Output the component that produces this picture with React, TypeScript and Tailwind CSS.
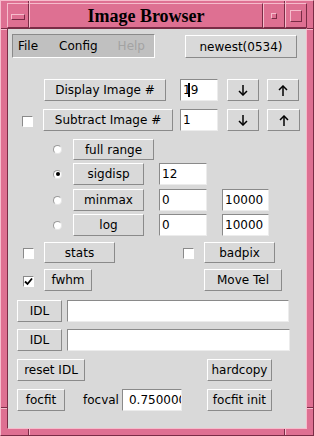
import React from "react";

function Btn({ cls, children }: { cls: string; children: React.ReactNode }) {
  return (
    <div
      className={`flex items-center justify-center shrink-0 bg-[#d9d9d9] border border-[#8a8a8a] border-t-white border-l-white leading-none whitespace-nowrap ${cls}`}
    >
      {children}
    </div>
  );
}

function Entry({ cls, children }: { cls: string; children?: React.ReactNode }) {
  return (
    <div
      className={`relative flex items-center shrink-0 bg-white border border-[#ececec] border-t-[#8a8a8a] border-l-[#8a8a8a] overflow-hidden whitespace-nowrap leading-none ${cls}`}
    >
      {children}
    </div>
  );
}

function Check({ cls, checked }: { cls: string; checked?: boolean }) {
  return (
    <div
      className={`flex items-center justify-center shrink-0 w-[11px] h-[11px] bg-white border border-white border-t-[#8a8a8a] border-l-[#8a8a8a] ${cls}`}
    >
      {checked && (
        <svg width="9" height="9" viewBox="0 0 9 9">
          <polyline points="1,4.5 3.5,7 8,1.5" fill="none" stroke="#000" strokeWidth="1.8" />
        </svg>
      )}
    </div>
  );
}

function Radio({ on }: { on?: boolean }) {
  return (
    <div className="ml-[45px] flex items-center justify-center shrink-0 w-[9px] h-[9px] rounded-full bg-white border border-[#e6e6e6] border-t-[#9a9a9a] border-l-[#9a9a9a]">
      {on && <div className="w-[4px] h-[4px] rounded-full bg-black" />}
    </div>
  );
}

function Arrow({ up }: { up?: boolean }) {
  return (
    <svg width="10" height="11" viewBox="0 0 10 11">
      {up ? (
        <g fill="none" stroke="#000" strokeWidth="1.5">
          <line x1="5" y1="1" x2="5" y2="11" />
          <polyline points="1,5 5,1 9,5" />
        </g>
      ) : (
        <g fill="none" stroke="#000" strokeWidth="1.5">
          <line x1="5" y1="0" x2="5" y2="10" />
          <polyline points="1,6 5,10 9,6" />
        </g>
      )}
    </svg>
  );
}

export default function App() {
  return (
    <div className="relative w-[314px] h-[436px] bg-[#de7092] border border-[#7a2c46] border-t-[#f6bccc] border-l-[#f6bccc] pt-[2px] px-[6px] pb-[6px] flex flex-col font-['DejaVu_Sans',sans-serif] text-[12px] text-black">
      {/* frame notches */}
      <div className="absolute left-[27px] top-0 w-[1px] h-[2px] bg-[#7a2c46]" />
      <div className="absolute left-[28px] top-0 w-[1px] h-[2px] bg-[#f6bccc]" />
      <div className="absolute left-[283px] top-0 w-[1px] h-[2px] bg-[#7a2c46]" />
      <div className="absolute left-[284px] top-0 w-[1px] h-[2px] bg-[#f6bccc]" />
      <div className="absolute left-0 top-[27px] w-[6px] h-[1px] bg-[#7a2c46]" />
      <div className="absolute left-0 top-[28px] w-[6px] h-[1px] bg-[#f6bccc]" />
      <div className="absolute right-0 top-[27px] w-[6px] h-[1px] bg-[#7a2c46]" />
      <div className="absolute right-0 top-[28px] w-[6px] h-[1px] bg-[#f6bccc]" />
      <div className="absolute left-0 top-[406px] w-[6px] h-[1px] bg-[#7a2c46]" />
      <div className="absolute left-0 top-[407px] w-[6px] h-[1px] bg-[#f6bccc]" />
      <div className="absolute right-0 top-[406px] w-[6px] h-[1px] bg-[#7a2c46]" />
      <div className="absolute right-0 top-[407px] w-[6px] h-[1px] bg-[#f6bccc]" />
      <div className="absolute left-[27px] bottom-0 w-[1px] h-[6px] bg-[#7a2c46]" />
      <div className="absolute left-[28px] bottom-0 w-[1px] h-[6px] bg-[#f6bccc]" />
      <div className="absolute left-[283px] bottom-0 w-[1px] h-[6px] bg-[#7a2c46]" />
      <div className="absolute left-[284px] bottom-0 w-[1px] h-[6px] bg-[#f6bccc]" />

      {/* title bar */}
      <div className="flex h-[25px] shrink-0">
        <div className="w-[22px] h-full flex items-center justify-center border border-[#7a2c46] border-t-[#f6bccc] border-l-[#f6bccc]">
          <div className="w-[14px] h-[6px] mt-[3px] border border-[#7a2c46] border-t-[#f6bccc] border-l-[#f6bccc]" />
        </div>
        <div className="flex-1 h-full flex items-center justify-center border border-[#7a2c46] border-t-[#f6bccc] border-l-[#f6bccc] font-['Liberation_Serif',serif] font-bold text-[18px] leading-none">
          Image Browser
        </div>
        <div className="w-[22px] h-full flex items-center justify-center border border-[#7a2c46] border-t-[#f6bccc] border-l-[#f6bccc]">
          <div className="w-[6px] h-[6px] mt-[1px] border border-[#7a2c46] border-t-[#f6bccc] border-l-[#f6bccc]" />
        </div>
        <div className="w-[22px] h-full flex items-center justify-center border border-[#7a2c46] border-t-[#f6bccc] border-l-[#f6bccc]">
          <div className="w-[12px] h-[12px] mt-[1px] border border-[#7a2c46] border-t-[#f6bccc] border-l-[#f6bccc]" />
        </div>
      </div>

      {/* content */}
      <div className="flex-1 flex flex-col bg-[#d9d9d9] border border-[#f6bccc] border-t-[#7a2c46] border-l-[#7a2c46]">
        {/* menu row */}
        <div className="flex items-start mt-[5px]">
          <div className="ml-[4px] w-[143px] h-[24px] bg-[#c0c0c0] border border-white border-t-[#8a8a8a] border-l-[#8a8a8a] flex items-center leading-none pl-[5px]">
            <span>File</span>
            <span className="ml-[21px]">Config</span>
            <span className="ml-[20px] text-[#a3a3a3]">Help</span>
          </div>
          <Btn cls="ml-[30px] mt-[1px] w-[112px] h-[23px]">newest(0534)</Btn>
        </div>

        {/* display row */}
        <div className="flex items-center mt-[21px] h-[22px]">
          <Btn cls="ml-[36px] w-[122px] h-[22px]">Display Image #</Btn>
          <Entry cls="ml-[14px] w-[38px] h-[22px] pl-[2px]">
            19
            <div className="absolute left-[7px] top-[3px] w-[2px] h-[14px] bg-black" />
          </Entry>
          <Btn cls="ml-[9px] w-[32px] h-[22px]">
            <Arrow />
          </Btn>
          <Btn cls="ml-[8px] w-[32px] h-[22px]">
            <Arrow up />
          </Btn>
        </div>

        {/* subtract row */}
        <div className="flex items-center mt-[8px] h-[22px]">
          <Check cls="ml-[14px] mt-[2px]" />
          <Btn cls="ml-[10px] w-[130px] h-[22px]">Subtract Image #</Btn>
          <Entry cls="ml-[7px] w-[38px] h-[22px] pl-[2px]">1</Entry>
          <Btn cls="ml-[9px] w-[32px] h-[22px]">
            <Arrow />
          </Btn>
          <Btn cls="ml-[8px] w-[33px] h-[22px]">
            <Arrow up />
          </Btn>
        </div>

        {/* full range */}
        <div className="flex items-center mt-[8px] h-[21px]">
          <Radio />
          <Btn cls="ml-[11px] w-[81px] h-[21px]">full range</Btn>
        </div>

        {/* sigdisp */}
        <div className="flex items-center mt-[3px] h-[22px]">
          <Radio on />
          <Btn cls="ml-[11px] w-[71px] h-[22px]">sigdisp</Btn>
          <Entry cls="ml-[15px] w-[48px] h-[22px] pl-[2px]">12</Entry>
        </div>

        {/* minmax */}
        <div className="flex items-center mt-[4px] h-[22px]">
          <Radio />
          <Btn cls="ml-[11px] w-[71px] h-[22px]">minmax</Btn>
          <Entry cls="ml-[15px] w-[48px] h-[22px] pl-[2px]">0</Entry>
          <Entry cls="ml-[15px] w-[47px] h-[22px] pl-[2px]">10000</Entry>
        </div>

        {/* log */}
        <div className="flex items-center mt-[3px] h-[22px]">
          <Radio />
          <Btn cls="ml-[11px] w-[71px] h-[22px]">log</Btn>
          <Entry cls="ml-[15px] w-[48px] h-[22px] pl-[2px]">0</Entry>
          <Entry cls="ml-[15px] w-[47px] h-[22px] pl-[2px]">10000</Entry>
        </div>

        {/* stats / badpix */}
        <div className="flex items-center mt-[6px] h-[21px]">
          <Check cls="ml-[15px] mt-[2px]" />
          <Btn cls="ml-[10px] w-[71px] h-[21px]">stats</Btn>
          <Check cls="ml-[68px] mt-[2px]" />
          <Btn cls="ml-[10px] w-[71px] h-[21px]">badpix</Btn>
        </div>

        {/* fwhm / move tel */}
        <div className="flex items-center mt-[6px] h-[22px]">
          <Check cls="ml-[15px] mt-[2px]" checked />
          <Btn cls="ml-[10px] w-[48px] h-[22px]">fwhm</Btn>
          <Btn cls="ml-[112px] w-[78px] h-[22px]">Move Tel</Btn>
        </div>

        {/* IDL 1 */}
        <div className="flex items-center mt-[9px] h-[22px]">
          <Btn cls="ml-[9px] w-[45px] h-[22px]">IDL</Btn>
          <Entry cls="ml-[5px] w-[222px] h-[22px]" />
        </div>

        {/* IDL 2 */}
        <div className="flex items-center mt-[7px] h-[22px]">
          <Btn cls="ml-[9px] w-[45px] h-[22px]">IDL</Btn>
          <Entry cls="ml-[5px] w-[223px] h-[22px]" />
        </div>

        {/* reset / hardcopy */}
        <div className="flex items-center mt-[8px] h-[22px]">
          <Btn cls="ml-[9px] w-[68px] h-[22px]">reset IDL</Btn>
          <Btn cls="ml-[122px] w-[65px] h-[22px]">hardcopy</Btn>
        </div>

        {/* focfit */}
        <div className="flex items-center mt-[8px] h-[22px]">
          <Btn cls="ml-[9px] w-[48px] h-[22px]">focfit</Btn>
          <span className="ml-[18px] leading-none">focval</span>
          <Entry cls="ml-[3px] w-[60px] h-[22px] pl-[6px]">0.750000</Entry>
          <Btn cls="ml-[25px] w-[65px] h-[22px]">focfit init</Btn>
        </div>
      </div>
    </div>
  );
}
